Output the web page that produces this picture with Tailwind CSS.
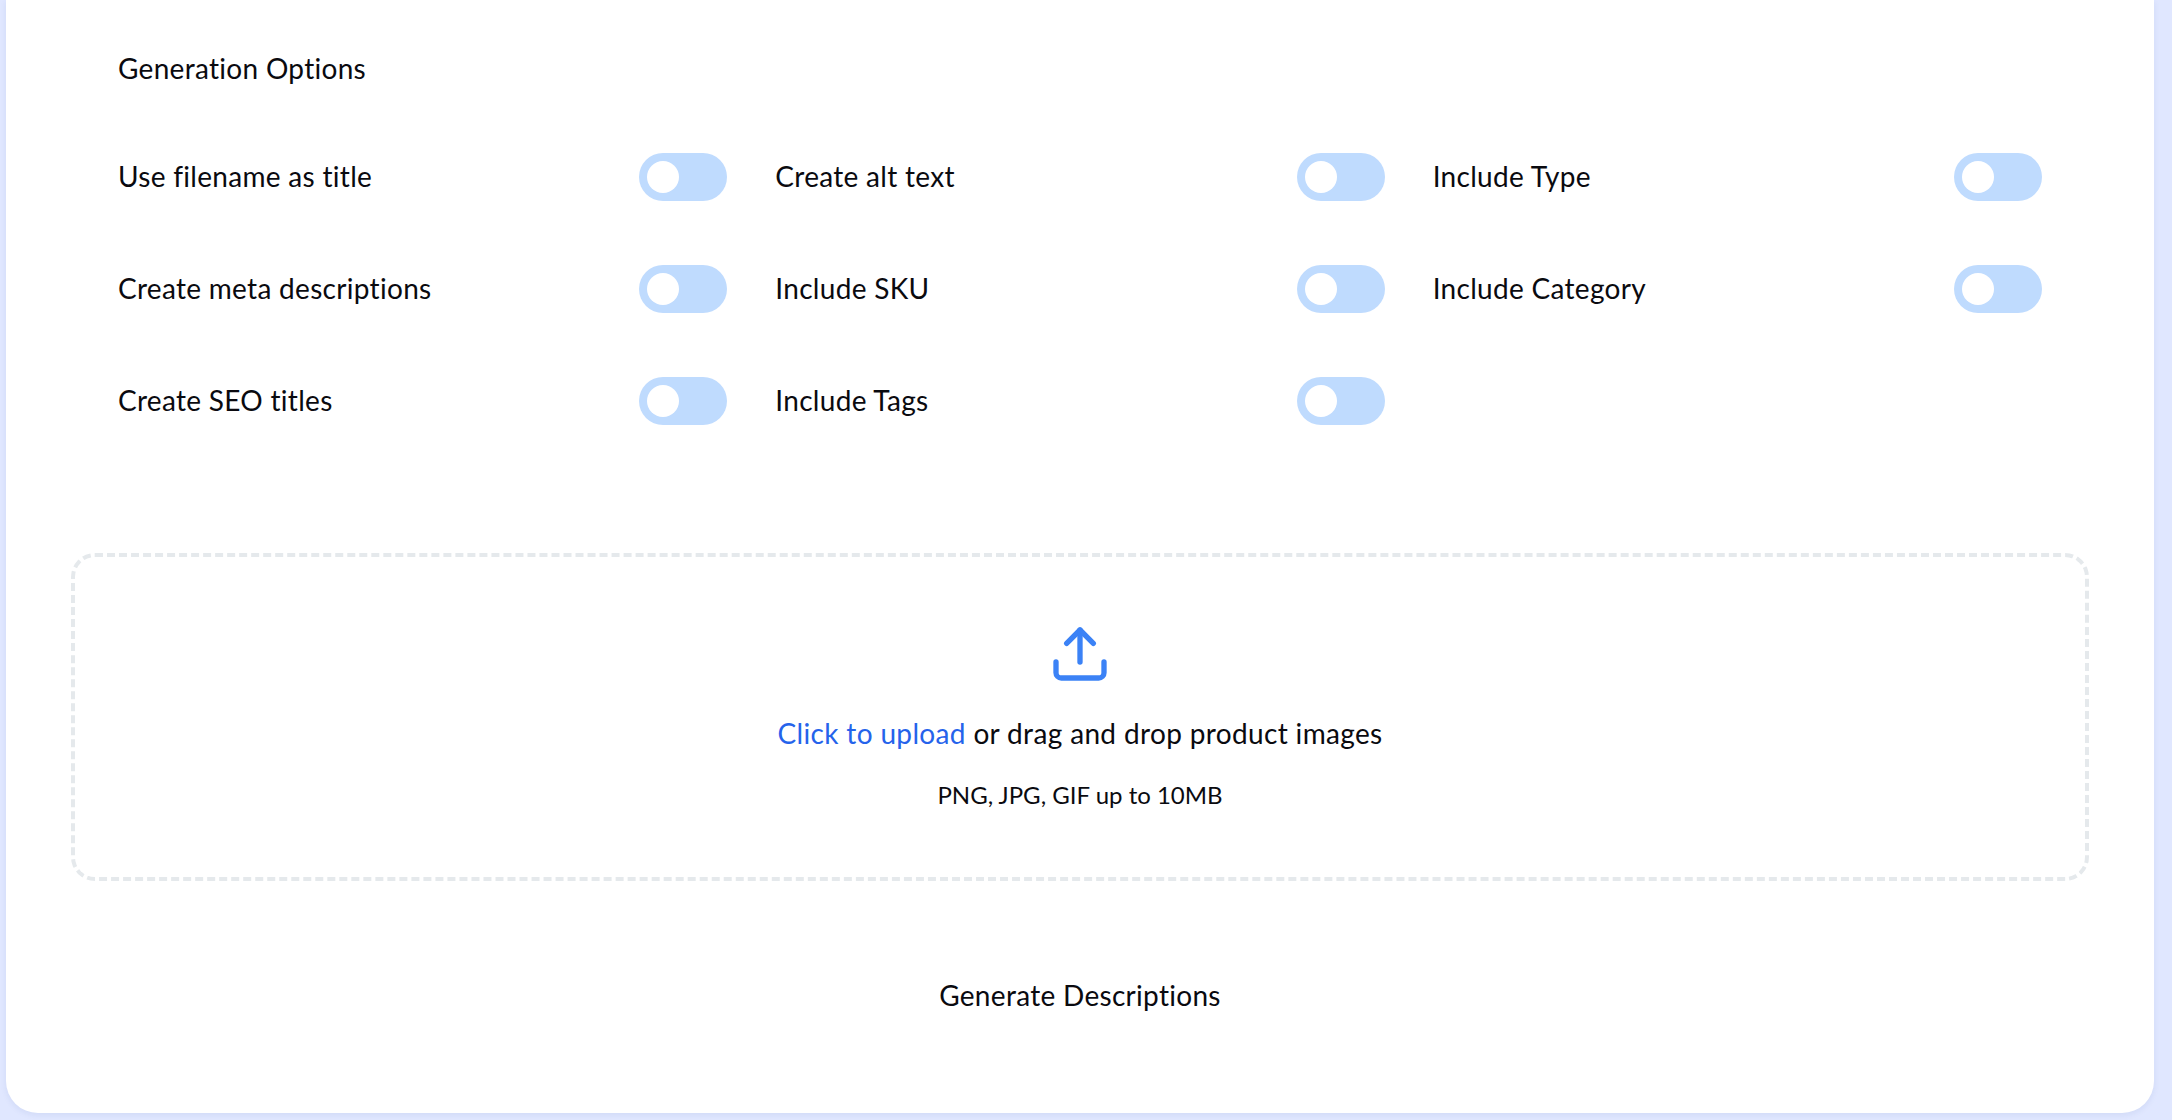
<!DOCTYPE html>
<html lang="en">
<head>
  <meta charset="UTF-8" />
  <title>Generation Options</title>
  <script src="https://cdn.jsdelivr.net/npm/@tailwindcss/browser@4"></script>
</head>
<body class="h-screen overflow-hidden bg-[#e0e7ff] font-['Lato',sans-serif] text-[28px] tracking-[0.3px] [font-variant-ligatures:none] text-[#0a0a0f]">
  <main class="ml-[6px] w-[2148px] h-[1113px] bg-white rounded-b-[32px] shadow-[0_2px_6px_rgba(30,58,138,0.08)] flex flex-col items-center">

    <!-- Options -->
    <section class="w-[1924px] pt-[48px]">
      <h2 class="h-[40px] leading-[40px]">Generation Options</h2>
      <div class="grid grid-cols-3 gap-x-[48px] gap-y-[64px] mt-[65px]">
        <label class="flex items-center justify-between h-[48px]"><span class="pb-[3px]">Use filename as title</span><span class="w-[88px] h-[48px] rounded-full bg-[#bfdbfe] flex items-center pl-[8px]"><span class="w-[32px] h-[32px] rounded-full bg-white"></span></span></label>
        <label class="flex items-center justify-between h-[48px]"><span class="pb-[3px]">Create alt text</span><span class="w-[88px] h-[48px] rounded-full bg-[#bfdbfe] flex items-center pl-[8px]"><span class="w-[32px] h-[32px] rounded-full bg-white"></span></span></label>
        <label class="flex items-center justify-between h-[48px]"><span class="pb-[3px]">Include Type</span><span class="w-[88px] h-[48px] rounded-full bg-[#bfdbfe] flex items-center pl-[8px]"><span class="w-[32px] h-[32px] rounded-full bg-white"></span></span></label>
        <label class="flex items-center justify-between h-[48px]"><span class="pb-[3px]">Create meta descriptions</span><span class="w-[88px] h-[48px] rounded-full bg-[#bfdbfe] flex items-center pl-[8px]"><span class="w-[32px] h-[32px] rounded-full bg-white"></span></span></label>
        <label class="flex items-center justify-between h-[48px]"><span class="pb-[3px]">Include SKU</span><span class="w-[88px] h-[48px] rounded-full bg-[#bfdbfe] flex items-center pl-[8px]"><span class="w-[32px] h-[32px] rounded-full bg-white"></span></span></label>
        <label class="flex items-center justify-between h-[48px]"><span class="pb-[3px]">Include Category</span><span class="w-[88px] h-[48px] rounded-full bg-[#bfdbfe] flex items-center pl-[8px]"><span class="w-[32px] h-[32px] rounded-full bg-white"></span></span></label>
        <label class="flex items-center justify-between h-[48px]"><span class="pb-[3px]">Create SEO titles</span><span class="w-[88px] h-[48px] rounded-full bg-[#bfdbfe] flex items-center pl-[8px]"><span class="w-[32px] h-[32px] rounded-full bg-white"></span></span></label>
        <label class="flex items-center justify-between h-[48px]"><span class="pb-[3px]">Include Tags</span><span class="w-[88px] h-[48px] rounded-full bg-[#bfdbfe] flex items-center pl-[8px]"><span class="w-[32px] h-[32px] rounded-full bg-white"></span></span></label>
      </div>
    </section>

    <!-- Upload -->
    <section class="w-[2018px] h-[328px] mt-[128px] border-4 border-dashed border-[#e5e9ec] rounded-[24px] flex flex-col items-center pt-[65px]">
      <svg class="w-[64px] h-[64px] text-[#3b82f6]" viewBox="0 0 24 24" fill="none" stroke="currentColor" stroke-width="2" stroke-linecap="round" stroke-linejoin="round">
        <path d="M21 15v4a2 2 0 0 1-2 2H5a2 2 0 0 1-2-2v-4"/>
        <polyline points="17 8 12 3 7 8"/>
        <line x1="12" y1="3" x2="12" y2="15"/>
      </svg>
      <p class="mt-[27px] leading-[40px] tracking-[0.35px]"><span class="text-[#2563eb]">Click to upload</span> or drag and drop product images</p>
      <p class="mt-[26px] text-[24px] leading-[32px] tracking-normal">PNG, JPG, GIF up to 10MB</p>
    </section>

    <button class="mt-[94px] leading-[40px]">Generate Descriptions</button>
  </main>
</body>
</html>
